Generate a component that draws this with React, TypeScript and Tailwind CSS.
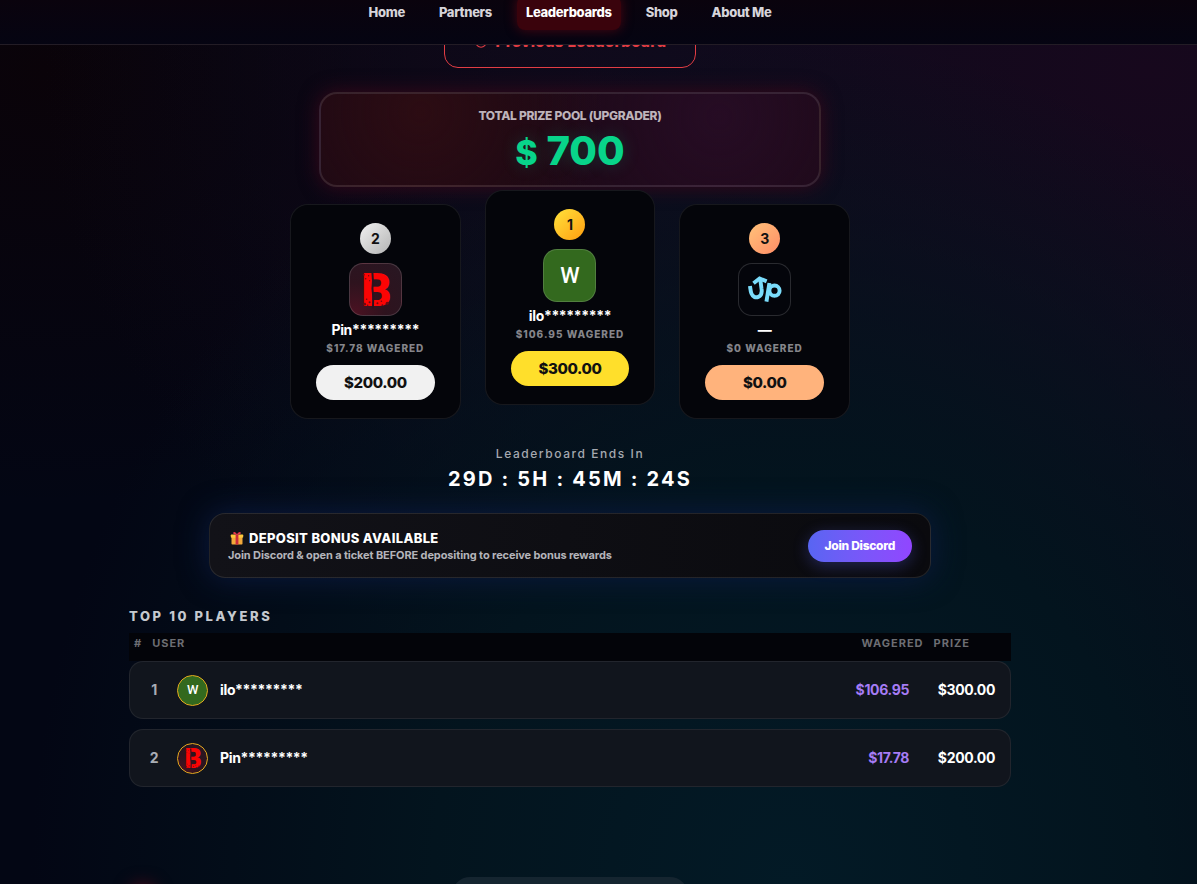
import { clsx } from 'clsx'
import { History } from 'lucide-react'

type Player = {
  rank: number
  name: string
  wagered: string
  prize: string
  avatar: 'w' | 'b' | 'up'
}

const NAV_ITEMS = ['Home', 'Partners', 'Leaderboards', 'Shop', 'About Me']

const PODIUM: Player[] = [
  { rank: 2, name: 'Pin*********', wagered: '$17.78', prize: '$200.00', avatar: 'b' },
  { rank: 1, name: 'ilo*********', wagered: '$106.95', prize: '$300.00', avatar: 'w' },
  { rank: 3, name: '—', wagered: '$0', prize: '$0.00', avatar: 'up' },
]

const PLAYERS: Player[] = [
  { rank: 1, name: 'ilo*********', wagered: '$106.95', prize: '$300.00', avatar: 'w' },
  { rank: 2, name: 'Pin*********', wagered: '$17.78', prize: '$200.00', avatar: 'b' },
]

const BADGE: Record<number, string> = {
  1: 'bg-linear-135 from-[#ffe23a] to-[#ff9d0a]',
  2: 'bg-linear-135 from-[#f2f2f2] to-[#b4b4b4]',
  3: 'bg-linear-135 from-[#ffc27a] to-[#ff8c66]',
}

const PILL: Record<number, string> = {
  1: 'bg-[#ffdf2b]',
  2: 'bg-[#f1f1f1]',
  3: 'bg-[#ffb37c]',
}

const AVATAR: Record<Player['avatar'], string> = {
  w: 'bg-[#33691e]',
  b: 'bg-[radial-gradient(circle_at_10%_95%,#4a1222_0%,#2e131e_45%,#281722_100%)]',
  up: 'bg-[#04050b]',
}

function StencilLogo() {
  return (
    <svg viewBox="0 0 52 52" className="size-full overflow-visible" aria-hidden>
      <text x="27" y="43" textAnchor="middle" fontFamily="Roboto, sans-serif" fontWeight="900" fontSize="48" fill="#fb0404">
        B
      </text>
      <path d="M21.800 8l.6 9-.5 8 .8 9-.3 11h2l.3-11-.8-9 .5-8-.6-9z" fill="#2c131d" />
      <g fill="#6e0810">
        <circle cx="16" cy="15" r="0.8" />
        <circle cx="19" cy="12" r="0.7" />
        <circle cx="14" cy="11" r="1" />
        <circle cx="20" cy="17" r="0.6" />
        <circle cx="17" cy="36" r="0.8" />
        <circle cx="20" cy="39" r="1" />
        <circle cx="15" cy="41" r="1.400" />
        <circle cx="18" cy="42" r="0.8" />
        <circle cx="28" cy="40" r="1" />
        <circle cx="32" cy="38" r="0.8" />
        <circle cx="38" cy="40" r="1.600" />
        <circle cx="33" cy="42" r="0.9" />
      </g>
    </svg>
  )
}

function UpLogo() {
  return (
    <svg viewBox="0 0 52 52" className="size-full" fill="none" stroke="#7adcfb" strokeWidth="4" aria-hidden>
      <path d="M11.200 22.400c.5 3.400.6 5.600 1.500 7.800 1.300 3.200 4.100 4.500 7 3.300 3.200-1.400 3.900-4.200 3.300-8L21.600 15" />
      <path d="M14.800 19.600l6.200-4.900 7.200 3" />
      <circle cx="36.200" cy="27.200" r="5.200" />
      <path d="M31 19.400L28 38.400" />
    </svg>
  )
}

function GiftIcon() {
  return (
    <svg viewBox="0 0 14 14" className="size-3.5" aria-hidden>
      <rect x="1.500" y="6" width="11" height="7.500" rx="0.800" fill="#f2a93b" />
      <rect x="0.800" y="3.500" width="12.400" height="3.200" rx="0.700" fill="#ffc83d" />
      <rect x="5.600" y="3.500" width="2.800" height="10" fill="#ca2a3c" />
      <path d="M7 3.700C5.500 3.700 3 3.400 3.200 1.800 3.500.2 6.200.8 7 3.700zM7 3.700c1.500 0 4-.3 3.800-1.900C10.500.2 7.800.8 7 3.700z" fill="#e8384f" />
    </svg>
  )
}

function Avatar({ kind, small = false }: { kind: Player['avatar']; small?: boolean }) {
  return (
    <span
      className={clsx(
        'flex shrink-0 items-center justify-center border',
        small ? 'size-[31px] rounded-full border-[#e3a81e]' : 'size-[53px] rounded-[14px] border-white/15',
        AVATAR[kind]
      )}
    >
      {kind === 'w' && (
        <span className={clsx('font-[Roboto] font-medium text-white', small ? 'text-[13px]' : 'text-[22px]')}>W</span>
      )}
      {kind === 'b' && <StencilLogo />}
      {kind === 'up' && <UpLogo />}
    </span>
  )
}

function PodiumCard({ player }: { player: Player }) {
  return (
    <article
      className={clsx(
        'flex flex-col items-center rounded-[18px] border border-white/8 bg-[#04050a] px-[25px] py-[18px]',
        player.rank === 1 && '-mt-3.5 mb-3.5'
      )}
    >
      <span
        className={clsx(
          'flex size-[31px] items-center justify-center rounded-full text-sm font-bold text-[#111111]',
          BADGE[player.rank]
        )}
      >
        {player.rank}
      </span>
      <div className="mt-[9px]">
        <Avatar kind={player.avatar} />
      </div>
      <h3 className="mt-1 text-sm font-bold tracking-tight text-white">{player.name}</h3>
      <p className="text-[10px] leading-4 font-extrabold tracking-widest text-[#85858a] uppercase">
        {player.wagered} wagered
      </p>
      <p
        className={clsx(
          'mt-[9px] w-full rounded-full text-center text-[15px] leading-[35px] font-extrabold tracking-tight text-[#111111]',
          PILL[player.rank]
        )}
      >
        {player.prize}
      </p>
    </article>
  )
}

export default function App() {
  return (
    <div className="relative h-screen overflow-hidden bg-[#030614] bg-[radial-gradient(ellipse_at_66%_100%,#031a26_0%,#03141e_32%,transparent_68%),radial-gradient(ellipse_at_96%_8%,#17081d_0%,#0f0a1c_30%,transparent_68%),radial-gradient(ellipse_at_4%_8%,#0a0309_0%,transparent_38%),radial-gradient(ellipse_at_50%_0%,#110816_0%,transparent_45%)] font-[Inter,sans-serif] text-white">
      <header className="relative z-10 h-[45px] border-b border-white/10 bg-linear-to-b from-[#0a030d] to-[#050412] pr-[57px]">
        <nav className="flex justify-center gap-4">
          {NAV_ITEMS.map((item) => (
            <a
              key={item}
              href="#"
              className={clsx(
                '-mt-1 rounded-lg px-[9px] pt-1.5 pb-2 text-[13px] leading-5 font-extrabold tracking-tight',
                item === 'Leaderboards'
                  ? 'bg-[#3a030c] text-white shadow-[0_0_12px_#4a0612]'
                  : 'text-[#d6d4da]'
              )}
            >
              {item}
            </a>
          ))}
        </nav>
      </header>

      <main className="pr-[57px]">
        <div className="-mt-[29px] flex justify-center">
          <button
            type="button"
            className="flex h-[52px] w-[252px] items-center justify-center gap-2 rounded-[14px] border border-[#e23d44] text-[15px] font-extrabold tracking-wide text-[#e23d44]"
          >
            <History className="size-3.5" strokeWidth={2} />
            Previous Leaderboard
          </button>
        </div>

        <section className="mx-auto mt-6 flex h-[95px] max-w-[502px] flex-col items-center rounded-[18px] border-2 border-white/10 bg-[#1a0814] bg-[radial-gradient(circle_at_20%_20%,#2c0c13_0%,transparent_45%),radial-gradient(circle_at_80%_25%,#260c24_0%,transparent_55%)] pt-3 shadow-[0_0_20px_#38081a]">
          <h2 className="text-xs leading-5 font-extrabold tracking-tight text-[#bdb3ba]">TOTAL PRIZE POOL (UPGRADER)</h2>
          <p className="mt-[3px] text-[40px] leading-[44px] font-extrabold text-[#08d48a] [text-shadow:0_0_18px_#08d48a33]">
            <span className="text-[34px]">$</span> 700
          </p>
        </section>

        <section className="mx-auto mt-[17px] grid max-w-[560px] grid-cols-3 gap-6">
          {PODIUM.map((player) => (
            <PodiumCard key={player.rank} player={player} />
          ))}
        </section>

        <section className="mt-[25px] text-center">
          <p className="text-xs leading-5 font-medium tracking-[0.13em] text-[#a5a9b0]">Leaderboard Ends In</p>
          <p className="text-xl leading-[30px] font-bold tracking-[0.11em]">29D : 5H : 45M : 24S</p>
        </section>

        <section className="mx-auto mt-[19px] flex h-[65px] max-w-[722px] items-center justify-between rounded-2xl border border-white/10 bg-linear-to-r from-[#121218] to-[#0a0a0e] px-[18px] shadow-[0_0_30px_#0b1a40]">
          <div>
            <h2 className="flex items-center gap-[5px] pl-0.5 text-[13px] leading-[18px] font-extrabold tracking-wide">
              <GiftIcon />
              DEPOSIT BONUS AVAILABLE
            </h2>
            <p className="text-[11px] leading-4 font-bold tracking-[-0.01em] text-[#b4b4ba]">
              Join Discord & open a ticket BEFORE depositing to receive bonus rewards
            </p>
          </div>
          <a
            href="#"
            className="rounded-full bg-linear-to-r from-[#5865f2] to-[#9146ff] px-[17px] text-xs leading-8 font-extrabold tracking-tight shadow-[0_4px_16px_#5865f24d]"
          >
            Join Discord
          </a>
        </section>

        <section className="mx-auto mt-7 max-w-[882px]">
          <h2 className="text-[13px] leading-5 font-extrabold tracking-[0.2em] text-[#c5c9ce]">TOP 10 PLAYERS</h2>
          <table className="mt-[7px] block w-full">
            <thead className="block">
              <tr className="flex h-7 bg-[#030409] pr-9 text-[11px] leading-5 font-extrabold tracking-[1px] text-[#6d6e73]">
                <th className="px-[5px]">#</th>
                <th className="flex-1 px-[5px] text-left">USER</th>
                <th className="px-[5px]">WAGERED</th>
                <th className="px-[5px]">PRIZE</th>
              </tr>
            </thead>
            <tbody className="flex flex-col gap-2.5">
              {PLAYERS.map((player) => (
                <tr
                  key={player.rank}
                  className="flex h-[58px] items-center rounded-[14px] border border-white/7 bg-[#11151d] px-[15px] text-sm font-bold tracking-tight"
                >
                  <td className="w-[18px] text-center text-[#a9adb5]">{player.rank}</td>
                  <td className="flex flex-1 items-center gap-3 pl-3.5">
                    <Avatar kind={player.avatar} small />
                    {player.name}
                  </td>
                  <td className="text-right text-[#a67cf5]">{player.wagered}</td>
                  <td className="w-[86px] text-right">{player.prize}</td>
                </tr>
              ))}
            </tbody>
          </table>
        </section>
      </main>

      <footer className="mt-[90px] grid grid-cols-[1fr_236px_1fr] pr-[57px]">
        <span className="mt-3 ml-[135px] size-4 rounded-full bg-[#5a0914] shadow-[0_0_18px_4px_#5a0a18]" />
        <div className="h-14 rounded-[18px] bg-[#152530]" />
      </footer>
    </div>
  )
}
